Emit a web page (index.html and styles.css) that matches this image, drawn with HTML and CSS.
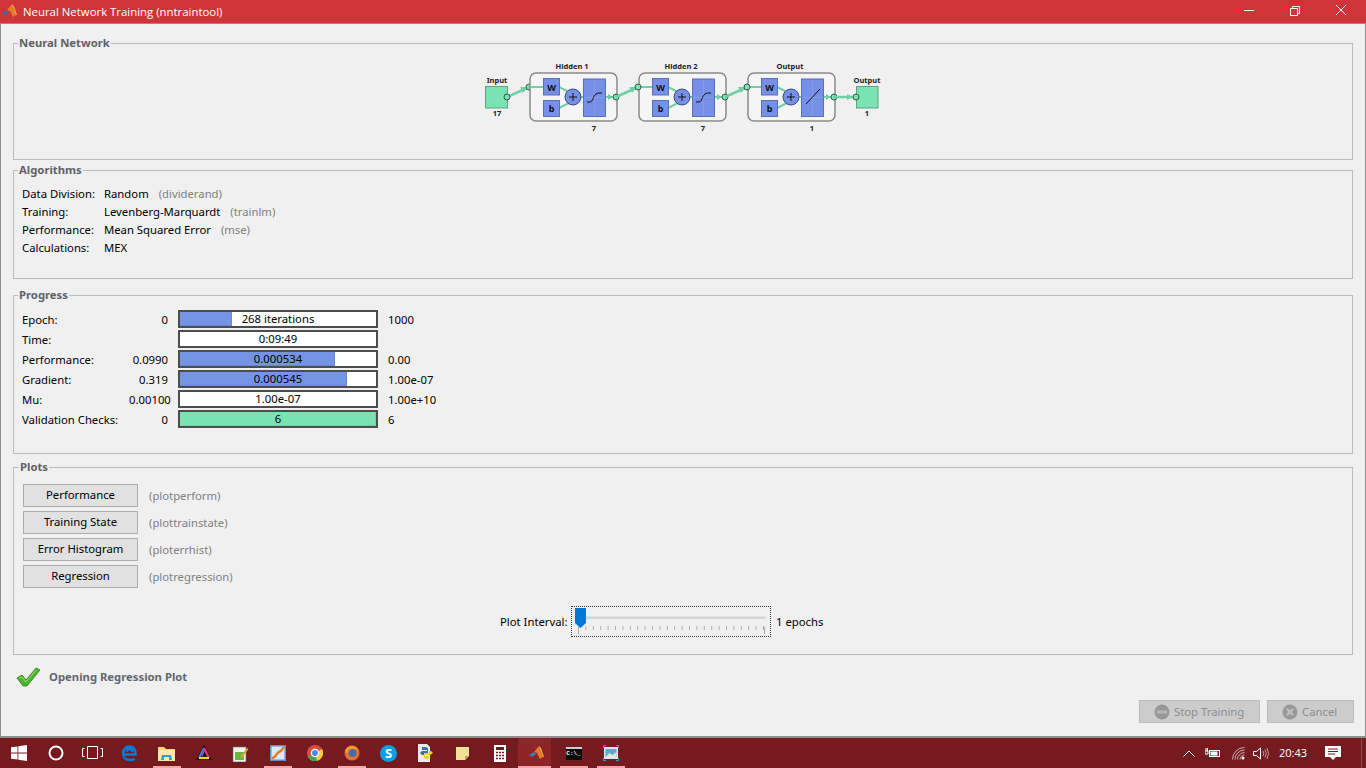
FILE: index.html
```html
<!DOCTYPE html>
<html lang="en">
<head>
<meta charset="utf-8">
<title>Neural Network Training (nntraintool)</title>
<link rel="stylesheet" href="styles.css">
</head>
<body>
<header class="titlebar">
  <svg class="app-icon" viewBox="0 0 16 16" width="16" height="16"><polygon points="0,10 5,7 7,9 3,12" fill="#3a6ea5"/><polygon points="5,7 10,1 14,12 11,14 8,8" fill="#e8792b"/><polygon points="10,1 12,3 15,12 14,12" fill="#f4b63f"/></svg>
  <span class="title-text">Neural Network Training (nntraintool)</span>
  <div class="win-controls">
    <svg class="win-btn" viewBox="0 0 46 24" width="46" height="24"><path d="M18 10.500h10" stroke="#fff" fill="none"/></svg>
    <svg class="win-btn" viewBox="0 0 46 24" width="46" height="24"><path d="M18.500 8.500h7v7h-7zM20.500 8.500v-2h7v7h-2" stroke="#fff" fill="none"/></svg>
    <svg class="win-btn" viewBox="0 0 46 24" width="46" height="24"><path d="M18 5l10 10M28 5l-10 10" stroke="#fff" fill="none"/></svg>
  </div>
</header>

<main class="window">
  <fieldset class="panel panel-network">
    <legend>Neural Network</legend>
    <div class="diagram-wrap">
      <svg class="diagram" viewBox="483 58 400 76" width="400" height="76">
        <defs>
          <g id="conn"><circle r="3" fill="#7be3b2" stroke="#2f5b49"/></g>
          <g id="layer">
            <rect x="530" y="73" width="87" height="48" rx="6" fill="#f5f5f5" stroke="#8a8a8a" stroke-width="1.500"/>
            <path d="M530 87h14M559 87l10 5M559 108l10-5" stroke="#6fd0a5" stroke-width="2" fill="none"/>
            <path d="M581 97h3M606 97h10" stroke="#6fd0a5" stroke-width="2" fill="none"/>
            <polygon points="608,94 613,97 608,100" fill="#6fd0a5"/>
            <rect x="543.500" y="78.500" width="16" height="16.500" fill="#7590e6" stroke="#5a70b5"/>
            <rect x="543.500" y="100.500" width="16" height="16" fill="#7590e6" stroke="#5a70b5"/>
            <text class="net-sym" x="551.500" y="90.500">W</text>
            <text class="net-sym" x="551.500" y="112">b</text>
            <circle cx="573" cy="97" r="8" fill="#7590e6" stroke="#3c4c80"/>
            <path d="M569 97h8M573 93v8" stroke="#111"/>
            <rect x="583.500" y="79" width="22" height="37.500" fill="#7590e6" stroke="#5a70b5"/>
            <path d="M584 97.500h21M594.500 80v36" stroke="#8fa3ea" stroke-width=".6"/>
            <circle cx="616" cy="97" r="3" fill="#7be3b2" stroke="#2f5b49"/>
          </g>
          <g id="hop">
            <path d="M616 97l20-9" stroke="#6fd0a5" stroke-width="2.500" fill="none"/>
            <polygon points="629,87 637,87 632,93" fill="#6fd0a5"/>
          </g>
          <path id="tansig" d="M587 102h3c3 0 3-6 6-8 1.500-1 3-1 6-1" stroke="#111" fill="none"/>
        </defs>
        <rect x="485.500" y="86.500" width="22" height="21.500" fill="#7be3b2" stroke="#5aa585"/>
        <path d="M507 97l20-9" stroke="#6fd0a5" stroke-width="2.500"/>
        <polygon points="520,87 528,87 523,93" fill="#6fd0a5"/>
        <use href="#conn" x="507" y="97"/><use href="#conn" x="529" y="87"/>
        <text class="net-label" x="497" y="83">Input</text>
        <text class="net-label" x="497" y="116">17</text>

        <use href="#layer"/><use href="#tansig"/>
        <text class="net-label" x="572" y="69">Hidden 1</text>
        <text class="net-label" x="594" y="131">7</text>

        <use href="#hop"/>
        <use href="#layer" x="109"/><use href="#tansig" x="109"/><use href="#conn" x="638" y="87"/>
        <text class="net-label" x="681" y="69">Hidden 2</text>
        <text class="net-label" x="703" y="131">7</text>

        <use href="#hop" x="109"/>
        <use href="#layer" x="218"/><use href="#conn" x="747" y="87"/>
        <path d="M806 104l14-15" stroke="#111" fill="none"/>
        <text class="net-label" x="790" y="69">Output</text>
        <text class="net-label" x="812" y="131">1</text>

        <path d="M834 97h20" stroke="#6fd0a5" stroke-width="2.500"/>
        <polygon points="847,94 853,97 847,100" fill="#6fd0a5"/>
        <rect x="856.500" y="86.500" width="21.500" height="21.500" fill="#7be3b2" stroke="#5aa585"/>
        <use href="#conn" x="856" y="97"/>
        <text class="net-label" x="867" y="83">Output</text>
        <text class="net-label" x="867" y="116">1</text>
      </svg>
    </div>
  </fieldset>

  <fieldset class="panel panel-algorithms">
    <legend>Algorithms</legend>
    <div class="algo-grid">
      <span>Data Division:</span><span>Random <i class="note">(dividerand)</i></span>
      <span>Training:</span><span>Levenberg-Marquardt <i class="note">(trainlm)</i></span>
      <span>Performance:</span><span>Mean Squared Error <i class="note">(mse)</i></span>
      <span>Calculations:</span><span>MEX</span>
    </div>
  </fieldset>

  <fieldset class="panel panel-progress">
    <legend>Progress</legend>
    <div class="progress-grid">
      <span>Epoch:</span><span class="min">0</span>
      <div class="bar"><div class="fill" style="width:26.500%"></div><span class="bar-text">268 iterations</span></div><span>1000</span>
      <span>Time:</span><span class="min"></span>
      <div class="bar"><span class="bar-text">0:09:49</span></div><span></span>
      <span>Performance:</span><span class="min">0.0990</span>
      <div class="bar"><div class="fill" style="width:79%"></div><span class="bar-text">0.000534</span></div><span>0.00</span>
      <span>Gradient:</span><span class="min">0.319</span>
      <div class="bar"><div class="fill" style="width:85%"></div><span class="bar-text">0.000545</span></div><span>1.00e-07</span>
      <span>Mu:</span><span class="min">0.00100</span>
      <div class="bar"><span class="bar-text">1.00e-07</span></div><span>1.00e+10</span>
      <span>Validation Checks:</span><span class="min">0</span>
      <div class="bar"><div class="fill fill-green" style="width:100%"></div><span class="bar-text">6</span></div><span>6</span>
    </div>
  </fieldset>

  <fieldset class="panel panel-plots">
    <legend>Plots</legend>
    <div class="plot-list">
      <button class="plot-btn">Performance</button><span class="note">(plotperform)</span>
      <button class="plot-btn">Training State</button><span class="note">(plottrainstate)</span>
      <button class="plot-btn">Error Histogram</button><span class="note">(ploterrhist)</span>
      <button class="plot-btn">Regression</button><span class="note">(plotregression)</span>
    </div>
    <div class="interval-row">
      <span class="interval-label">Plot Interval:</span>
      <div class="slider">
        <svg viewBox="0 0 198 29" width="198" height="29">
          <rect x="6" y="9.500" width="187" height="2.500" fill="#d6d6d6"/>
          <path d="M6 21h187" stroke="#adadad" stroke-width="4" stroke-dasharray="1 6.400" fill="none"/>
          <path d="M6.500 20v7M192.500 20v7" stroke="#adadad" fill="none"/>
          <polygon points="3,1 14,1 14,16 8.500,21 3,16" fill="#0078d7"/>
        </svg>
      </div>
      <span>1 epochs</span>
    </div>
  </fieldset>

  <div class="status">
    <svg viewBox="0 0 24 20" width="24" height="20"><path d="M1 11l5-3 4 5L20 1l4 2L11 19H7z" fill="#4fb52e" stroke="#2f7a1c" stroke-width=".8"/><path d="M3 11l3-1 4 5L20 3" fill="none" stroke="#8ee06a"/></svg>
    <span>Opening Regression Plot</span>
  </div>

  <div class="actions">
    <div class="act-btn act-stop">
      <svg viewBox="0 0 16 16" width="16" height="16"><circle cx="8" cy="8" r="7.500" fill="#999"/><path d="M3 8h10" stroke="#b5b5b5" stroke-width="3"/></svg>
      <span>Stop Training</span>
    </div>
    <div class="act-btn act-cancel">
      <svg viewBox="0 0 16 16" width="16" height="16"><circle cx="8" cy="8" r="7.500" fill="#999"/><path d="M5 5l6 6M11 5l-6 6" stroke="#c4c4c4" stroke-width="2"/></svg>
      <span>Cancel</span>
    </div>
  </div>
</main>

<footer class="taskbar">
  <div class="tb-apps">
    <div class="tb-item"><svg viewBox="0 0 16 16" width="16" height="16"><path d="M0 2.300l6.500-.9v6.200H0zM7.300 1.300L16 0v7.600H7.300zM0 8.400h6.500v6.200L0 13.700zM7.300 8.400H16V16l-8.700-1.300z" fill="#fff"/></svg></div>
    <div class="tb-item"><svg viewBox="0 0 16 16" width="16" height="16"><circle cx="8" cy="8" r="6.500" fill="none" stroke="#fff" stroke-width="2"/></svg></div>
    <div class="tb-item"><svg viewBox="0 0 21 14" width="21" height="14"><path d="M5.500.5h10v12h-10zM2.500 2.500h-2v8h2M18.500 2.500h2v8h-2" fill="none" stroke="#fff"/></svg></div>
    <div class="tb-item"><svg viewBox="0 0 16 16" width="16" height="16"><path d="M2 9.500h11.500C13.500 4 10.500 1.500 7.500 1.500 4 1.500 1 4.500 1 8.500c0 4 3 6.500 7 6.500 2 0 3.500-.5 4.500-1.200M4.500 6.800C5 4.800 6 4 7.500 4s2.500 1 3 2.800" fill="none" stroke="#0a78d7" stroke-width="2.600"/></svg></div>
    <div class="tb-item open"><svg viewBox="0 0 17 15" width="17" height="15"><path d="M0 1h6l2 2h9v12H0z" fill="#f8d775"/><rect y="4" width="17" height="11" fill="#fde9a6"/><path d="M4 9h9l1 5h-3v-3H6v3H3z" fill="#2f9be0"/></svg></div>
    <div class="tb-item"><svg viewBox="0 0 16 16" width="16" height="16"><polygon points="8,0 16,15 0,15" fill="#111"/><path d="M8 3L3 13" stroke="#3f7fe8" stroke-width="2"/><path d="M8 3l5 10" stroke="#e8317e" stroke-width="2.200"/><path d="M3 13h10" stroke="#f4d91f" stroke-width="2.200"/><path d="M8 6l-2 5" stroke="#9d47d6" stroke-width="1.500"/></svg></div>
    <div class="tb-item"><svg viewBox="0 0 17 17" width="17" height="17"><rect x="1" y="2" width="13" height="15" fill="#f2f2ec" stroke="#666" stroke-width=".6"/><rect x="3" y="7" width="9" height="8" fill="#6cb33f"/><path d="M2 2v-1M4 2v-1M6 2v-1M8 2v-1M10 2v-1M12 2v-1" stroke="#555"/><path d="M8 12L15 3l1.500 1L10 13z" fill="#e2a32e"/></svg></div>
    <div class="tb-item open"><svg viewBox="0 0 16 16" width="16" height="16"><rect width="16" height="16" fill="#5d8fc2"/><rect x="1.500" y="1.500" width="13" height="13" fill="#dfe9f3"/><path d="M2 13C6 13 6 8 9 7s3-3 5-5" stroke="#e8792b" stroke-width="2.500" fill="none"/></svg></div>
    <div class="tb-item"><svg viewBox="0 0 16 16" width="16" height="16"><circle cx="8" cy="8" r="8" fill="#dd4b3e"/><path d="M8 8L1.100 12A8 8 0 0 0 8 16 8 8 0 0 0 15 4z" fill="#f7c93e"/><path d="M8 8L1.100 12A8 8 0 0 0 10 15.700z" fill="#3ca455"/><circle cx="8" cy="8" r="3.600" fill="#4a8af0" stroke="#fff" stroke-width="1.300"/></svg></div>
    <div class="tb-item open"><svg viewBox="0 0 16 16" width="16" height="16"><circle cx="8" cy="8" r="7.500" fill="#e8702a"/><circle cx="8.500" cy="8" r="4" fill="#3f6fb0"/><path d="M1 6c1-3 4-5 7-5 3 0 6 2 7 6-2-3-5-3-7-3s-4 1-4 5z" fill="#f39a2b"/></svg></div>
    <div class="tb-item"><div class="skype">S</div></div>
    <div class="tb-item"><svg viewBox="0 0 17 18" width="17" height="18"><path d="M1 0h9l3 3v15H1z" fill="#ebebeb"/><path d="M8 3h-3v3h5v1H5L3 9l2 2h2V9h4V4z" fill="#3a6fa5"/><path d="M9 15h3v-3H8v-1h5l3-2-2-2h-2v2H7v5z" fill="#f5cd3d"/></svg></div>
    <div class="tb-item"><svg viewBox="0 0 13 13" width="13" height="13"><path d="M0 0h13v9l-4 4H0z" fill="#f0e199"/><path d="M13 9H9v4z" fill="#b9a85a"/></svg></div>
    <div class="tb-item"><svg viewBox="0 0 12 17" width="12" height="17"><rect width="12" height="17" fill="#fff"/><rect x="2" y="2" width="8" height="3" fill="#751b20"/><path d="M2 7.500h2M5 7.500h2M8 7.500h2M2 10.500h2M5 10.500h2M8 10.500h2M2 13.500h2M5 13.500h2M8 13.500h2" stroke="#751b20" stroke-width="1.500"/></svg></div>
    <div class="tb-item active"><svg viewBox="0 0 16 16" width="16" height="16"><polygon points="0,10 5,7 7,9 3,12" fill="#3a7ec0"/><polygon points="5,7 10,1 14,12 11,14 8,8" fill="#e8792b"/><polygon points="10,1 12,3 15,12 14,12" fill="#f4b63f"/></svg></div>
    <div class="tb-item open"><div class="cmd">C:\_</div></div>
    <div class="tb-item open"><svg viewBox="0 0 16 16" width="16" height="16"><rect x="1" y="2" width="14" height="12" fill="#dbe8f2"/><rect x="2.500" y="4" width="11" height="8" fill="#67a5cf"/><path d="M2.500 12l4-4 3 2 4-3v5z" fill="#d9e8d2"/><path d="M0 3V0h3M13 0h3v3M16 13v3h-3M3 16H0v-3" stroke="#2f92d8" stroke-width="2" fill="none"/></svg></div>
  </div>
  <div class="tray">
    <svg viewBox="0 0 12 7" width="12" height="7"><path d="M.5 6.500L6 1l5.500 5.500" stroke="#fff" fill="none"/></svg>
    <svg class="tray-battery" viewBox="0 0 16 10" width="16" height="10"><rect x="4.500" y="2.500" width="10" height="6" fill="none" stroke="#fff"/><rect x="5.500" y="3.500" width="7" height="4" fill="#fff"/><path d="M0 3h3v3H0zM1 0v3M2.500 0v3" stroke="#fff" fill="none"/></svg>
    <svg class="tray-wifi" viewBox="0 0 13 13" width="13" height="13"><path d="M.5 12.500A12 12 0 0 1 12.500.5M3 12.500A9.500 9.500 0 0 1 12.500 3M5.500 12.500A7 7 0 0 1 12.500 5.500M8 12.500a4.500 4.500 0 0 1 4.500-4.500" stroke="#e8d0d0" fill="none" stroke-width=".8"/><circle cx="11" cy="11" r="1.500" fill="#fff"/></svg>
    <svg class="tray-sound" viewBox="0 0 16 13" width="16" height="13"><path d="M.5 4.500h3L7.500 1v11l-4-3.500h-3z" fill="none" stroke="#fff"/><path d="M10 4q1.500 2.500 0 5M12 2.500q2.500 4 0 8M14 1q3 5.500 0 11" fill="none" stroke="#b99"/></svg>
    <span class="clock">20:43</span>
    <svg class="tray-note" viewBox="0 0 16 15" width="16" height="15"><path d="M0 0h16v11h-5l-3 3-3-3H0z" fill="#fff"/><path d="M3 3h10M3 5.500h10M3 8h7" stroke="#751b20"/></svg>
  </div>
</footer>
</body>
</html>
```

FILE: styles.css
```css
* { box-sizing: border-box; }
html, body { margin: 0; height: 100%; }
body {
  width: 1366px;
  height: 768px;
  overflow: hidden;
  display: flex;
  flex-direction: column;
  font: 11.300px/16px "Noto Sans", sans-serif;
  color: #000;
  background: #f0f0f0;
}

.titlebar {
  height: 24px;
  flex: none;
  display: flex;
  align-items: center;
  padding-left: 2px;
  background: #d13438;
  border-bottom: 1px solid #8f8f8f;
  color: #fff;
}
.app-icon { margin-top: -1px; }
.title-text { margin-left: 5px; font: 11.400px/16px "Open Sans", sans-serif; }
.win-controls { display: flex; margin-left: auto; padding-right: 2px; }
.win-btn { display: block; }

.window {
  flex: 1;
  min-height: 0;
  padding: 12px 12px 0;
  border-left: 1px solid #8f8f8f;
  border-right: 1px solid #8f8f8f;
  border-bottom: 2px solid #8f8f8f;
}

.panel {
  margin: 0;
  min-width: 0;
  padding: 8px 8px 0;
  border: 1px solid #bcbcbc;
}
.panel legend {
  margin-left: -4px;
  padding: 0 1px 1px;
  font-weight: 700;
  line-height: 13px;
  color: #5f6268;
}
.panel-network { height: 124px; }
.panel-algorithms { height: 116px; margin-top: 3px; }
.panel-progress { height: 166px; margin-top: 9px; }
.panel-plots { height: 195px; margin-top: 6px; padding-top: 10px; padding-left: 9px; }

.diagram-wrap { display: flex; justify-content: center; }
.diagram { display: block; }
.net-label { font: 700 7.500px "Noto Sans", sans-serif; text-anchor: middle; fill: #222; }
.net-sym { font: 700 9px "Noto Sans", sans-serif; text-anchor: middle; fill: #111; }

.note { color: #808080; font-style: normal; margin-left: 7px; }
.algo-grid {
  display: grid;
  grid-template-columns: 82px auto;
  justify-content: start;
  grid-auto-rows: 18px;
  align-items: center;
  white-space: nowrap;
}

.progress-grid {
  display: grid;
  grid-template-columns: 97px 39px 200px auto;
  column-gap: 10px;
  row-gap: 2px;
  grid-auto-rows: 18px;
  justify-content: start;
  align-items: center;
  white-space: nowrap;
}
.progress-grid > span { padding-top: 2px; }
.min { text-align: right; }
.bar {
  position: relative;
  height: 18px;
  border: 2px solid #4d4d4d;
  background: #fff;
}
.fill { height: 100%; background: #7594e6; box-shadow: inset -1px -1px 0 #6a86d6; }
.fill-green { background: #7be3b2; box-shadow: inset -1px -1px 0 #6fd4a5; }
.bar-text {
  position: absolute;
  inset: 0;
  text-align: center;
  line-height: 14px;
}

.plot-list {
  display: grid;
  grid-template-columns: 115px auto;
  column-gap: 11px;
  row-gap: 4px;
  grid-auto-rows: 23px;
  justify-content: start;
  align-items: center;
}
.plot-btn {
  height: 23px;
  padding: 0 0 1px;
  font: inherit;
  color: #000;
  background: #e1e1e1;
  border: 1px solid #adadad;
}
.plot-list .note { margin-left: 0; }

.interval-row {
  display: flex;
  align-items: center;
  gap: 5px;
  margin: 18px 0 0 477px;
}
.interval-label { width: 66px; white-space: nowrap; }
.slider {
  width: 200px;
  height: 31px;
  border: 1px dotted #333;
}
.slider svg { display: block; }

.status {
  display: flex;
  align-items: center;
  gap: 9px;
  margin: 12px 0 0 3px;
  height: 20px;
  font-weight: 700;
  color: #636770;
}

.actions {
  display: flex;
  justify-content: flex-end;
  gap: 7px;
  margin: 13px -1px 0 0;
}
.act-btn {
  height: 23px;
  display: flex;
  align-items: center;
  gap: 4px;
  background: #cccccc;
  border: 1px solid #bdbdbd;
  color: #8c8c8c;
}
.act-stop { width: 121px; padding-left: 14px; }
.act-cancel { width: 87px; padding-left: 14px; }

.taskbar {
  height: 30px;
  flex: none;
  display: flex;
  justify-content: space-between;
  background: #751b20;
  color: #fff;
}
.tb-apps { display: flex; }
.tb-item {
  width: 37px;
  height: 30px;
  display: flex;
  align-items: center;
  justify-content: center;
}
.tb-item.open {
  background: linear-gradient(#f3a7a7, #f3a7a7) center bottom / 28px 2px no-repeat;
}
.tb-item.active {
  background: linear-gradient(#f3a7a7, #f3a7a7) left bottom / 33px 2px no-repeat,
              linear-gradient(#8f2428, #8f2428) left top / 33px 100% no-repeat;
}
.skype {
  width: 17px;
  height: 17px;
  border-radius: 50%;
  background: #0d9fe3;
  color: #fff;
  font: 700 13px/17px "Noto Sans", sans-serif;
  text-align: center;
}
.cmd {
  width: 16px;
  height: 13px;
  background: #0c0c0c;
  border-top: 2px solid #ccc;
  color: #fff;
  font: 700 6px/10px "Liberation Mono", monospace;
  text-align: center;
}
.tray {
  display: flex;
  align-items: center;
  padding-right: 20px;
  border-right: 1px solid #8f4a4d;
  margin-right: 4px;
}
.tray-battery { margin-left: 10px; }
.tray-wifi { margin-left: 11px; }
.tray-sound { margin-left: 8px; }
.clock { margin-left: 10px; font: 11px/16px "Open Sans", sans-serif; }
.tray-note { margin-left: 18px; }
```
